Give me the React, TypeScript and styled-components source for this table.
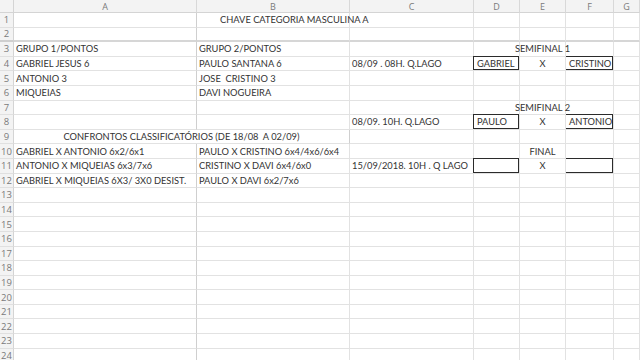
import React from 'react';
import styled, { createGlobalStyle } from 'styled-components';

const GlobalStyle = createGlobalStyle`
  html, body {
    margin: 0;
    padding: 0;
    background: #ffffff;
    overflow: hidden;
  }
  body {
    font-family: 'Lato', 'Open Sans', sans-serif;
  }
`;

const COLS = ['A', 'B', 'C', 'D', 'E', 'F', 'G'];
const ROW_COUNT = 24;

const Sheet = styled.div`
  display: grid;
  grid-template-columns: 14px 183px 153px 124px 46px 46px 48px 1fr;
  grid-template-rows: 13px repeat(${ROW_COUNT}, 14.6px);
  width: 640px;
  height: 360px;
  overflow: hidden;
`;

const Corner = styled.div`
  background: #f3f3f3;
  border-right: 1px solid #d4d4d4;
  border-bottom: 1px solid #d4d4d4;
  box-sizing: border-box;
`;

const ColHeader = styled.div`
  background: #f3f3f3;
  border-right: 1px solid #d8d8d8;
  border-bottom: 1px solid #d4d4d4;
  color: #7a7a7a;
  font-family: 'Open Sans', sans-serif;
  font-size: 9px;
  display: flex;
  align-items: center;
  justify-content: center;
  box-sizing: border-box;
`;

const RowHeader = styled.div<{ $split?: boolean }>`
  background: #f3f3f3;
  border-right: 1px solid #d4d4d4;
  border-bottom: ${p => (p.$split ? '2px solid #cfcfcf' : '1px solid #e0e0e0')};
  color: #7a7a7a;
  font-family: 'Open Sans', sans-serif;
  font-size: 9.5px;
  display: flex;
  align-items: center;
  justify-content: center;
  box-sizing: border-box;
`;

const Cell = styled.div<{ $span?: number; $align?: string; $split?: boolean; $dark?: boolean }>`
  grid-column: span ${p => p.$span ?? 1};
  position: relative;
  box-sizing: border-box;
  border-right: 1px solid ${p => (p.$dark ? '#cfcfcf' : '#e2e2e2')};
  border-bottom: ${p => (p.$split ? '2px solid #d6d6d6' : '1px solid #e2e2e2')};
  display: flex;
  align-items: center;
  justify-content: ${p => p.$align ?? 'flex-start'};
  padding: 0 2px;
  font-size: 9.3px;
  color: #333333;
  white-space: pre;
  overflow: visible;
  z-index: ${p => (p.$align === 'center' ? 1 : 0)};
`;

const Boxed = styled.span`
  position: absolute;
  inset: -1px 0 0 -1px;
  border: 1.5px solid #2b2b2b;
  display: flex;
  align-items: center;
  padding-left: 3px;
  background: #ffffff;
`;

const Indent = styled.span<{ $by: number }>`
  padding-left: ${p => p.$by}px;
`;

type CellSpec = { text?: string; span?: number; align?: string; box?: boolean; indent?: number };

// cell contents keyed by "row:col"
const cells: Record<string, CellSpec> = {
  '1:B': { text: 'CHAVE CATEGORIA MASCULINA A', indent: 21 },
  '3:A': { text: 'GRUPO 1/PONTOS' },
  '3:B': { text: 'GRUPO 2/PONTOS' },
  '3:E': { text: 'SEMIFINAL 1', align: 'center' },
  '4:A': { text: 'GABRIEL JESUS 6' },
  '4:B': { text: 'PAULO SANTANA 6' },
  '4:C': { text: '08/09 . 08H. Q.LAGO' },
  '4:D': { text: 'GABRIEL', box: true },
  '4:E': { text: 'X', align: 'center' },
  '4:F': { text: 'CRISTINO', box: true },
  '5:A': { text: 'ANTONIO 3' },
  '5:B': { text: 'JOSE  CRISTINO 3' },
  '6:A': { text: 'MIQUEIAS' },
  '6:B': { text: 'DAVI NOGUEIRA' },
  '7:E': { text: 'SEMIFINAL 2', align: 'center' },
  '8:C': { text: '08/09. 10H. Q.LAGO' },
  '8:D': { text: 'PAULO', box: true },
  '8:E': { text: 'X', align: 'center' },
  '8:F': { text: 'ANTONIO', box: true },
  '9:A': { text: 'CONFRONTOS CLASSIFICATÓRIOS (DE 18/08  A 02/09)', span: 2, align: 'center' },
  '10:A': { text: 'GABRIEL X ANTONIO 6x2/6x1' },
  '10:B': { text: 'PAULO X CRISTINO 6x4/4x6/6x4' },
  '10:E': { text: 'FINAL', align: 'center' },
  '11:A': { text: 'ANTONIO X MIQUEIAS 6x3/7x6' },
  '11:B': { text: 'CRISTINO X DAVI 6x4/6x0' },
  '11:C': { text: '15/09/2018. 10H . Q LAGO' },
  '11:D': { text: '', box: true },
  '11:E': { text: 'X', align: 'center' },
  '11:F': { text: '', box: true },
  '12:A': { text: 'GABRIEL X MIQUEIAS 6X3/ 3X0 DESIST.' },
  '12:B': { text: 'PAULO X DAVI 6x2/7x6' },
};

export default function App() {
  const rows = Array.from({ length: ROW_COUNT }, (_, i) => i + 1);

  return (
    <>
      <GlobalStyle />
      <Sheet>
        <Corner />
        {COLS.map(c => (
          <ColHeader key={c}>{c}</ColHeader>
        ))}
        {rows.map(r => {
          const out: React.ReactNode[] = [
            <RowHeader key={`h${r}`} $split={r === 2}>{r}</RowHeader>,
          ];
          let skip = 0;
          COLS.forEach(c => {
            if (skip > 0) {
              skip--;
              return;
            }
            const spec = cells[`${r}:${c}`];
            if (spec?.span) skip = spec.span - 1;
            out.push(
              <Cell
                key={`${r}${c}`}
                $span={spec?.span}
                $align={spec?.align}
                $split={r === 2}
                $dark={c === 'A'}
              >
                {spec?.box ? (
                  <Boxed>{spec.text}</Boxed>
                ) : spec?.indent ? (
                  <Indent $by={spec.indent}>{spec.text}</Indent>
                ) : (
                  spec?.text
                )}
              </Cell>
            );
          });
          return out;
        })}
      </Sheet>
    </>
  );
}
